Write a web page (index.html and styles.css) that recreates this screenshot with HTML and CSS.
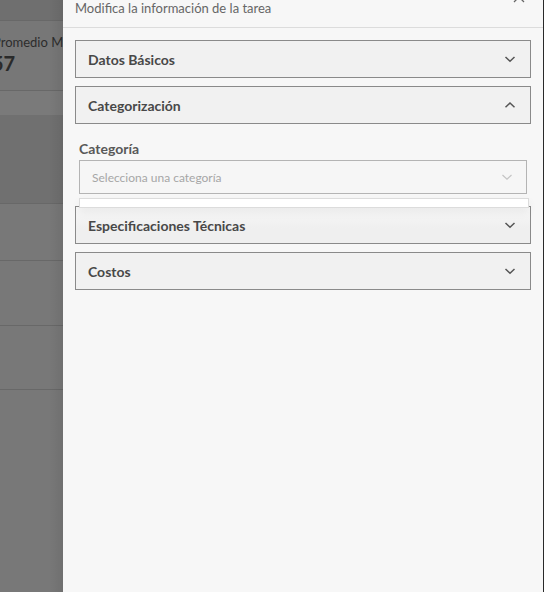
FILE: index.html
```html
<!DOCTYPE html>
<html lang="es">
<head>
<meta charset="utf-8">
<link rel="stylesheet" href="styles.css">
</head>
<body>
<div class="screen">
  <div class="backdrop">
    <div class="bd-row bd-top"></div>
    <div class="bd-row bd-stat">
      <div class="stat-label">Promedio Ma</div>
      <div class="stat-value">57</div>
    </div>
    <div class="bd-row bd-sub"></div>
    <div class="bd-row bd-head"></div>
    <div class="bd-row bd-r1"></div>
    <div class="bd-row bd-r2"></div>
    <div class="bd-row bd-r3"></div>
    <div class="bd-row bd-rest"></div>
    <div class="bd-shadow"></div>
  </div>
  <div class="panel">
    <div class="panel-header">
      <span class="subtitle">Modifica la información de la tarea</span>
      <button class="close" aria-label="Cerrar">
        <svg width="12" height="12" viewBox="0 0 12 12"><path d="M1 1L11 11M11 1L1 11" stroke="#666" stroke-width="1.3" fill="none"/></svg>
      </button>
    </div>
    <div class="panel-body">
      <div class="acc">
        <div class="acc-head"><span>Datos Básicos</span>
          <svg class="chev" width="12" height="8" viewBox="0 0 12 8"><path d="M1.5 2L6 6.2L10.5 2" stroke="#555" stroke-width="1.5" fill="none"/></svg>
        </div>
      </div>
      <div class="acc open">
        <div class="acc-head"><span>Categorización</span>
          <svg class="chev" width="12" height="8" viewBox="0 0 12 8"><path d="M1.5 6.2L6 2L10.5 6.2" stroke="#555" stroke-width="1.5" fill="none"/></svg>
        </div>
        <div class="acc-content">
          <label class="field-label">Categoría</label>
          <div class="select-wrap">
            <div class="select">
              <span class="placeholder">Selecciona una categoría</span>
              <svg width="12" height="8" viewBox="0 0 12 8"><path d="M1.5 2L6 6.2L10.5 2" stroke="#c4c4c4" stroke-width="1.2" fill="none"/></svg>
            </div>
            <div class="dropdown"></div>
          </div>
        </div>
      </div>
      <div class="acc under">
        <div class="acc-head"><span>Especificaciones Técnicas</span>
          <svg class="chev" width="12" height="8" viewBox="0 0 12 8"><path d="M1.5 2L6 6.2L10.5 2" stroke="#555" stroke-width="1.5" fill="none"/></svg>
        </div>
      </div>
      <div class="acc">
        <div class="acc-head"><span>Costos</span>
          <svg class="chev" width="12" height="8" viewBox="0 0 12 8"><path d="M1.5 2L6 6.2L10.5 2" stroke="#555" stroke-width="1.5" fill="none"/></svg>
        </div>
      </div>
    </div>
  </div>
</div>
</body>
</html>
```
FILE: styles.css
```css
* { box-sizing: border-box; }
html, body { margin: 0; padding: 0; }
body {
  width: 544px;
  height: 592px;
  overflow: hidden;
  font-family: "Lato", "Open Sans", sans-serif;
  background: #767676;
}
.screen {
  display: flex;
  height: 592px;
}
.backdrop {
  width: 63px;
  flex: none;
  position: relative;
  overflow: hidden;
  background: #767676;
  display: flex;
  flex-direction: column;
}
.bd-row {
  border-bottom: 1px solid #686868;
  flex: none;
}
.bd-top { height: 21px; background: #6f6f6f; }
.bd-stat { height: 70px; background: #777; padding-top: 12px; }
.bd-sub { height: 24px; background: #7a7a7a; border-bottom: none; }
.bd-head { height: 89px; background: #707070; }
.bd-r1 { height: 57px; background: #787878; }
.bd-r2 { height: 65px; background: #787878; }
.bd-r3 { height: 64px; background: #787878; }
.bd-rest { flex: 1; background: #787878; border-bottom: none; }
.stat-label {
  margin-left: -7px;
  white-space: nowrap;
  font-size: 13px;
  line-height: 18px;
  color: #2c2c2c;
}
.stat-value {
  margin-left: -8px;
  font-size: 20px;
  font-weight: 700;
  line-height: 24px;
  color: #2a2a2a;
}
.bd-shadow {
  position: absolute;
  top: 0; bottom: 0; right: 0;
  width: 14px;
  background: linear-gradient(to right, rgba(0,0,0,0), rgba(0,0,0,0.07));
}
.panel {
  width: 481px;
  flex: none;
  background: #f7f7f7;
  border-right: 1px solid #2a2a2a;
  display: flex;
  flex-direction: column;
}
.panel-header {
  position: relative;
  height: 28px;
  border-bottom: 1px solid #dcdcdc;
  padding: 0 12px;
  display: flex;
  align-items: flex-start;
}
.subtitle {
  font-size: 13px;
  line-height: 16px;
  color: #666;
}
.close {
  position: absolute;
  right: 18px;
  top: -9px;
  width: 12px;
  height: 12px;
  padding: 0;
  border: none;
  background: none;
}
.close svg { display: block; }
.panel-body {
  padding: 12px 12px;
  display: flex;
  flex-direction: column;
  gap: 8px;
}
.acc-head {
  height: 38px;
  border: 1px solid #8a8a8a;
  background: #f1f1f1;
  display: flex;
  align-items: center;
  justify-content: space-between;
  padding: 0 14px 0 12px;
  font-size: 14px;
  font-weight: 700;
  color: #484848;
}
.chev { display: block; }
.acc-content {
  padding: 15px 4px 4px 4px;
  display: flex;
  flex-direction: column;
}
.field-label {
  font-size: 14px;
  font-weight: 700;
  line-height: 20px;
  color: #595959;
  margin-bottom: 1px;
}
.select-wrap { position: relative; }
.select {
  height: 34px;
  border: 1px solid #b4b4b4;
  background: #f6f6f6;
  display: flex;
  align-items: center;
  justify-content: space-between;
  padding: 0 13px 0 12px;
}
.placeholder {
  font-size: 12px;
  color: #a6a6a6;
}
.dropdown {
  position: absolute;
  left: 0;
  right: -2px;
  top: 38px;
  height: 10px;
  background: #fff;
  border: 1px solid #dcdcdc;
  box-shadow: 0 4px 10px rgba(0,0,0,0.06);
  z-index: 2;
}
.acc.under .acc-head {
  background: linear-gradient(to bottom, #f7f7f7, #efefef 60%);
}
```
